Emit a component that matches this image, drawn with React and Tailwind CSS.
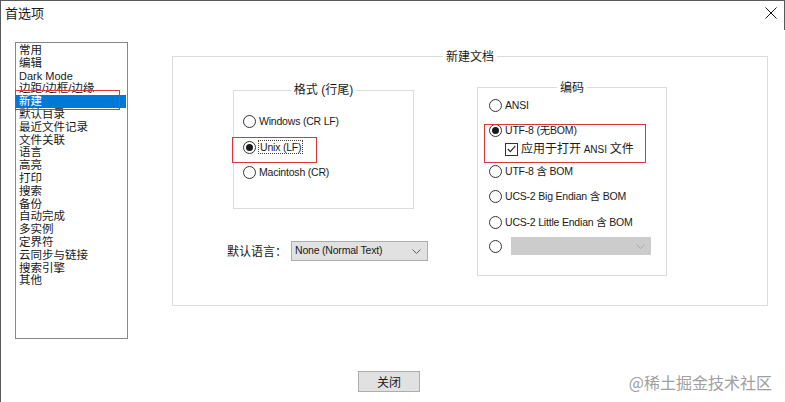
import React from 'react';

const SANS = "font-['Liberation_Sans','Noto_Sans_CJK_SC',sans-serif]";
const CJK = "font-['Noto_Sans_CJK_SC','Liberation_Sans',sans-serif]";

const pages = [
  '常用', '编辑', 'Dark Mode', '边距/边框/边缘', '新建', '默认目录', '最近文件记录',
  '文件关联', '语言', '高亮', '打印', '搜索', '备份', '自动完成', '多实例', '定界符',
  '云同步与链接', '搜索引擎', '其他',
];

function Radio({ checked }) {
  return (
    <span className="flex h-[13px] w-[13px] shrink-0 items-center justify-center rounded-full border border-[#333] bg-white">
      {checked && <span className="h-[7px] w-[7px] rounded-full bg-[#1a1a1a]" />}
    </span>
  );
}

function Chevron({ color = '#606060' }) {
  return (
    <svg width="9" height="5" viewBox="0 0 9 5" fill="none">
      <polyline points="0.5,0.5 4.5,4.5 8.5,0.5" stroke={color} strokeWidth="1" />
    </svg>
  );
}

function Option({ checked, children, className = '' }) {
  return (
    <div className={`flex h-[14px] items-center gap-[3px] ${className}`}>
      <Radio checked={checked} />
      <span className={`${SANS} whitespace-nowrap text-[10.5px] leading-[14px] tracking-[-0.2px] text-[#1a1a1a]`}>
        {children}
      </span>
    </div>
  );
}

export default function App() {
  return (
    <div className={`relative h-[402px] w-[785px] overflow-hidden border-l border-t border-[#5a5a5a] bg-white ${CJK} text-[#1a1a1a]`}>
      {/* title bar */}
      <div className="flex h-[29px] items-start justify-between border-r border-[#5a5a5a] pt-[4px] pl-[4px] pr-[7px]">
        <span className="text-[13px] leading-[16px]">首选项</span>
        <svg className="mt-[2px]" width="12" height="12" viewBox="0 0 12 12">
          <path d="M0.5 0.5 L11.5 11.5 M11.5 0.5 L0.5 11.5" stroke="#111" strokeWidth="1" />
        </svg>
      </div>

      <div className="flex items-start">
        {/* page list */}
        <div className={`${SANS} ml-[14px] mt-[12px] h-[297px] w-[113px] border border-[#828790] pt-[1px]`}>
          {pages.map((p) =>
            p === '新建' ? (
              <div key={p} className="mr-[1px] h-[12.8px] bg-[#0078d7] pl-[3px] text-[11.5px] leading-[12.8px] text-white">
                {p}
              </div>
            ) : p === 'Dark Mode' ? (
              <div key={p} className="h-[12.8px] pl-[3px] text-[11px] leading-[12.8px]">
                {p}
              </div>
            ) : (
              <div key={p} className="h-[12.8px] pl-[3px] text-[11.5px] leading-[12.8px]">
                {p}
              </div>
            )
          )}
        </div>

        {/* 新建文档 panel */}
        <fieldset className="ml-[44px] mt-[19px] h-[257px] w-[596px] min-w-0 border border-[#dcdcdc] p-0">
          <legend className="mx-auto px-[3px] text-[12px] leading-[14px]">新建文档</legend>
          <div className="flex items-start">
            <div className="ml-[54px] flex w-[201px] flex-col">
              <fieldset className="ml-[6px] mt-[20px] h-[126px] w-[181px] min-w-0 border border-[#dcdcdc] p-0">
                <legend className={`${SANS} mx-auto px-[3px] text-[12px] leading-[14px]`}>格式 (行尾)</legend>
                <div className="flex flex-col pl-[9px]">
                  <Option className="mt-[17px]">Windows (CR LF)</Option>
                  <div className="mt-[12px] flex h-[14px] items-center gap-[2px]">
                    <Radio checked />
                    <span className={`${SANS} border border-dotted border-[#444] px-[1px] text-[10.5px] leading-[12px] tracking-[-0.2px]`}>
                      Unix (LF)
                    </span>
                  </div>
                  <Option className="mt-[11px]">Macintosh (CR)</Option>
                </div>
              </fieldset>

              <div className="mt-[32px] flex h-[20px] items-center gap-[4px]">
                <span className="whitespace-nowrap text-[12px] leading-[14px]">默认语言：</span>
                <div className="flex h-[20px] w-[140px] items-center justify-between border border-[#adadad] bg-[#e1e1e1] pl-[3px] pr-[6px]">
                  <span className={`${SANS} text-[10.5px] tracking-[-0.2px]`}>None (Normal Text)</span>
                  <Chevron />
                </div>
              </div>
            </div>

            <fieldset className="ml-[49px] mt-[17px] h-[196px] w-[190px] min-w-0 border border-[#dcdcdc] p-0">
              <legend className="mx-auto px-[3px] text-[12px] leading-[14px]">编码</legend>
              <div className="flex flex-col pl-[11px]">
                <Option className="mt-[4px]">ANSI</Option>
                <Option checked className="mt-[11px]">UTF-8 (无BOM)</Option>
                <div className="ml-[16px] mt-[5px] flex h-[14px] items-center gap-[3px]">
                  <span className="flex h-[13px] w-[13px] shrink-0 items-center justify-center border border-[#333] bg-white">
                    <svg width="9" height="8" viewBox="0 0 9 8" fill="none">
                      <polyline points="0.8,4 3.3,6.6 8.3,0.8" stroke="#222" strokeWidth="1.1" />
                    </svg>
                  </span>
                  <span className="whitespace-nowrap text-[12px] leading-[14px]">
                    应用于打开 <span className={`${SANS} text-[10px]`}>ANSI</span> 文件
                  </span>
                </div>
                <Option className="mt-[8px]">UTF-8 含 BOM</Option>
                <Option className="mt-[11px]">UCS-2 Big Endian 含 BOM</Option>
                <Option className="mt-[12px]">UCS-2 Little Endian 含 BOM</Option>
                <div className="mt-[8px] flex h-[18px] items-center gap-[9px]">
                  <Radio />
                  <div className="flex h-[18px] w-[140px] items-center justify-end bg-[#cccccc] pr-[6px]">
                    <Chevron color="#a8a8a8" />
                  </div>
                </div>
              </div>
            </fieldset>
          </div>
        </fieldset>
      </div>

      {/* bottom row */}
      <div className="mt-[32px] flex h-[21px] items-center">
        <button className="ml-[357px] h-[21px] w-[62px] border border-[#adadad] bg-[#e1e1e1] text-[12px] leading-[14px]">
          关闭
        </button>
        <span className="ml-auto mr-[13px] text-[16px] leading-[20px] text-[#a0a0a0]">@稀土掘金技术社区</span>
      </div>

      {/* red annotation boxes */}
      <div className="absolute left-[14px] top-[89px] h-[20px] w-[105px] border border-[#d9363e]" />
      <div className="absolute left-[231px] top-[136px] h-[26px] w-[85px] border border-[#d9363e]" />
      <div className="absolute left-[483px] top-[123px] h-[39px] w-[162px] border border-[#d9363e]" />
    </div>
  );
}
